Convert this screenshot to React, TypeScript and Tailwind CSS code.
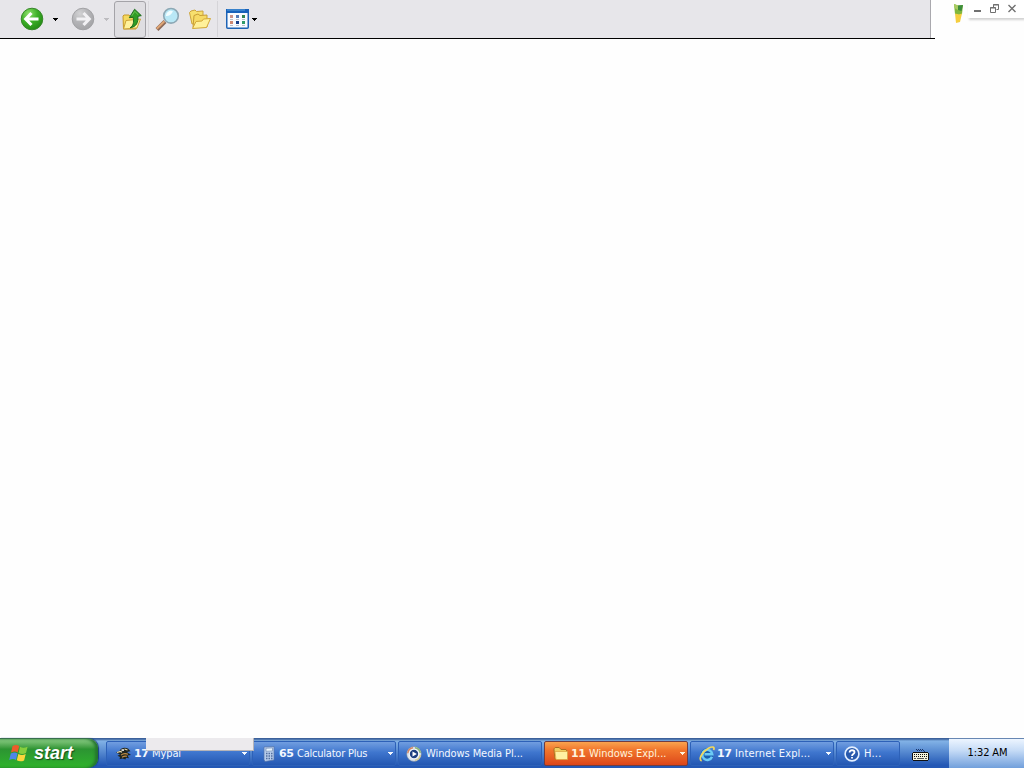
import type { ReactNode } from 'react'
import clsx from 'clsx'

const Caret = ({ className }: { className?: string }) => (
  <svg viewBox="0 0 5 3" shapeRendering="crispEdges" className={clsx('h-[3px] w-[5px] shrink-0', className)}>
    <path d="M0 0h5v1H4v1H3v1H2V2H1V1H0z" fill="currentColor" />
  </svg>
)

const RoundArrow = ({ forward }: { forward?: boolean }) => {
  const id = forward ? 'forward-fill' : 'back-fill'
  return (
    <svg viewBox="0 0 24 24" className="size-6 shrink-0">
      <defs>
        <radialGradient id={id} cx="35%" cy="25%" r="80%">
          <stop offset="0" stopColor={forward ? '#d2d2d4' : '#8fe06c'} />
          <stop offset="0.5" stopColor={forward ? '#b4b4b7' : '#3db027'} />
          <stop offset="1" stopColor={forward ? '#a3a3a6' : '#238a14'} />
        </radialGradient>
      </defs>
      <circle cx="12" cy="12" r="10.8" fill={`url(#${id})`} stroke={forward ? '#a2a2a5' : '#38872a'} strokeWidth="1" />
      <path
        d="M11.5 6 5.7 12l5.8 6M6.5 12h12"
        fill="none"
        stroke={forward ? '#f2f1f4' : '#fff'}
        strokeWidth="3.1"
        transform={forward ? 'translate(24 0) scale(-1 1)' : undefined}
      />
    </svg>
  )
}

const FolderUpIcon = () => (
  <svg viewBox="0 0 22 24" className="h-6 w-[22px]">
    <path d="M2 9 3 8h5l2 2h5v12H2.5z" fill="#f5d95f" stroke="#c79a28" />
    <path d="m2.5 22 2.5-8.5 14.5-1.5L16 21z" fill="#fff29b" stroke="#cca238" />
    <path d="M9 20.8c3.4-2 4-5 3.2-10.5l-3.9.4L13.6 2.2l6.7 6.4-3.4.8c.6 6-1.6 10.6-7.9 11.4z" fill="#2f9d25" stroke="#17661a" strokeWidth=".9" />
    <path d="m10.8 8.9 2.9-4.6 3.6 3.5" fill="none" stroke="#6fc455" />
  </svg>
)

const SearchIcon = () => (
  <svg viewBox="0 0 25 25" className="size-[25px] shrink-0">
    <path d="m2 22.5 8-8" stroke="#8b6857" strokeWidth="4" />
    <path d="m1.8 21.8 7.6-7.6" stroke="#dfa575" strokeWidth="2" />
    <circle cx="16" cy="8.8" r="7.3" fill="#b9e8f6" stroke="#8da8b5" strokeWidth="1.6" />
    <path d="M11 9a5 5 0 0 1 7-4.8c-2 4-4 5-7 4.8" fill="#f1fdff" />
  </svg>
)

const FoldersIcon = () => (
  <svg viewBox="0 0 24 23" className="h-[23px] w-6 shrink-0">
    <path d="M4 16 1.5 4.5 3 3l4-1 1.5 1.5L15 3v12z" fill="#f7e06e" stroke="#cda33c" />
    <path d="M5 19.5 6 7.5 10 6l2 1.5 7-.5v12z" fill="#f6da65" stroke="#c89d35" />
    <path d="m4.5 20.5 3.5-7 6-.5 1.5-2 7-.5-4 9z" fill="#fff19a" stroke="#d3a938" />
  </svg>
)

const viewCells = ['#c99289', '#527ab6', '#318451', '#cf8872', '#193f8a', '#2f9a68']

const ViewsIcon = () => (
  <svg viewBox="0 0 23 20" className="h-5 w-[23px] shrink-0">
    <rect x=".75" y=".75" width="21.5" height="18.5" rx="1" fill="#f9fbff" stroke="#1d63b5" strokeWidth="1.5" />
    <path d="M0 0h23v4H0z" fill="#1761ba" />
    <path d="M1 1h18" stroke="#5ba3dd" />
    {viewCells.map((fill, i) => (
      <g key={fill} transform={`translate(${4 + (i % 3) * 6} ${6 + Math.floor(i / 3) * 6})`}>
        <rect width="3" height="3" fill={fill} />
        <path d="M0 4.5h3" stroke="#b8bdca" />
      </g>
    ))}
  </svg>
)

const FlagIcon = ({ className }: { className?: string }) => (
  <svg viewBox="0 0 20 18" className={className}>
    <path d="M3.6 2c2.8-1.5 4.6-1.2 6.6.1L8.7 8.4C6.8 7.1 5 7.1 2 8.4z" fill="#ed5b2b" />
    <path d="M11 2.8c2.5 1.4 4.8 1.2 7.6-.1L17 9c-2.6 1.2-5 1.3-7.4-.1z" fill="#86ce3d" />
    <path d="M1.8 9.4c2.8-1.2 4.8-1.2 6.7.1L7 15.9c-2.2-1.3-4-1.3-6.8 0z" fill="#4e86e8" />
    <path d="M9.3 10c2.5 1.4 4.9 1.3 7.4.1l-1.6 6.3c-2.5 1.2-4.9 1.2-7.3-.1z" fill="#fbd53c" />
  </svg>
)

const BirdIcon = () => (
  <svg viewBox="0 0 16 16" className="size-4 shrink-0">
    <path d="M0 6.5 3.5 5C5 1.5 9 1 12 2.5l2.5 2.8L11 6l4 3-3.5.6 1.5 2.6-3-.5-.5 1.8-3-1-3 .7L4 11 1.5 9.8 4 8.5z" fill="#20251f" />
    <path d="m1 6.5 3.5-1 1.5.8M8.5 3l3 1" fill="none" stroke="#e8d9ad" strokeWidth="1.2" />
    <path d="M5 9.2c2-1.8 4-2 7-1M6 11.2c2-1.2 3-1.4 5-.9" fill="none" stroke="#c58f45" strokeWidth="1.1" />
    <path d="M5.5 3.3h2.5v1.5H5.5z" fill="#fff" />
  </svg>
)

const CalculatorIcon = () => (
  <svg viewBox="0 0 16 16" className="size-4 shrink-0">
    <path d="m3 1 10-.5V14l-9 1.5-1-2z" fill="#b7cceb" stroke="#5573a9" strokeWidth=".7" />
    <path d="m5 2.3 6.5-.4v3L5 5.3z" fill="#e8f5ff" stroke="#6881a8" strokeWidth=".6" />
    <path d="M5 7.4h1.5m1 0H9m1 0h1.5M5 10h1.5m1 0H9m1 0h1.5M5 12.6h1.5m1 0H9m1 0h1.5" stroke="#526e9e" strokeWidth="1.5" />
  </svg>
)

const MediaIcon = () => (
  <svg viewBox="0 0 16 16" className="size-4 shrink-0">
    <circle cx="8" cy="8" r="7.4" fill="#dce5f0" stroke="#6e7f98" strokeWidth=".6" />
    <path d="M1.8 7.3A6.2 6.2 0 0 1 7 1.8" stroke="#d9855f" strokeWidth="1.4" fill="none" />
    <path d="M9 1.8A6.2 6.2 0 0 1 14.2 7" stroke="#8ab874" strokeWidth="1.4" fill="none" />
    <path d="M14.2 9A6.2 6.2 0 0 1 9 14.2" stroke="#dcca79" strokeWidth="1.2" fill="none" />
    <circle cx="8" cy="8" r="5" fill="#fff" />
    <circle cx="8" cy="8" r="4.2" fill="#1d3f80" />
    <path d="m6.5 5.4 4.4 2.6-4.4 2.6z" fill="#fff" />
  </svg>
)

const FolderIcon = () => (
  <svg viewBox="0 0 16 16" className="size-4 shrink-0">
    <path d="M1 4V2.8L2.2 1.5h4L8 3.5h5L14 5v8H2z" fill="#f0cf60" stroke="#a96d20" />
    <path d="M2 5.5h12.5V13.5H3z" fill="#fff1a2" stroke="#dba441" strokeWidth=".7" />
  </svg>
)

const ExplorerIcon = () => (
  <svg viewBox="0 0 16 16" className="size-4 shrink-0">
    <circle cx="8" cy="8.5" r="6.3" fill="#1b5fae" />
    <path d="M13 10.7A5 5 0 1 1 13.3 8.3H5.5" fill="none" stroke="#6ccbf6" strokeWidth="2.5" />
    <path d="M2.6 15C-1.2 13.5 3.5 5.5 9.5 2.2 13.5.1 15.9.8 14.7 4" fill="none" stroke="#f2d85b" strokeWidth="1.7" />
  </svg>
)

const HelpIcon = () => (
  <svg viewBox="0 0 16 16" className="size-4 shrink-0">
    <circle cx="8" cy="8" r="6.9" fill="#2859ad" stroke="#e3efff" strokeWidth="1.6" />
    <path d="M5.6 6.4c0-3 4.9-2.7 4.9-.2C10.5 8 8 8 8 10" fill="none" stroke="#fff" strokeWidth="1.8" />
    <path d="M7.1 11h1.8v1.6H7.1z" fill="#fff" />
  </svg>
)

const KeyboardIcon = () => (
  <svg viewBox="0 0 17 13" shapeRendering="crispEdges" className="h-[13px] w-[17px]">
    <path d="M4 1h1v1h1V1h1v1h1V1h1v1h1V1h1v1h1v1h1v1h-1V3h-1V2h-1v1H9V2H8v1H7V2H6v1H5V2H4z" fill="#17346a" />
    <path d="M1 4h15v1h1v7h-1v1H1v-1H0V5h1z" fill="#111" />
    <path d="M1 5h15v7H1z" fill="#f5f4dd" />
    <path d="M2 6.5h13M2 8.5h13" stroke="#111" strokeDasharray="1 1" />
    <path d="M2 10.5h2m1 0h7m1 0h2" stroke="#555" />
  </svg>
)

interface Task {
  label: string
  icon: ReactNode
  count?: number
  width: string
  iconPad: string
  gap: string
  tracking: string
  caret?: boolean
  active?: boolean
}

const tasks: Task[] = [
  { label: 'Mypal', icon: <BirdIcon />, count: 17, width: 'w-[144px]', iconPad: 'pl-[9px]', gap: 'gap-[2px]', tracking: 'tracking-[-0.1px]', caret: true },
  { label: 'Calculator Plus', icon: <CalculatorIcon />, count: 65, width: 'w-[144px]', iconPad: 'pl-[8px]', gap: 'gap-[2px]', tracking: 'tracking-[-0.22px]', caret: true },
  { label: 'Windows Media Pl...', icon: <MediaIcon />, width: 'w-[144px]', iconPad: 'pl-[7px]', gap: 'gap-[4px]', tracking: 'tracking-[-0.08px]' },
  { label: 'Windows Expl...', icon: <FolderIcon />, count: 11, width: 'w-[144px]', iconPad: 'pl-[8px]', gap: 'gap-[2px]', tracking: 'tracking-[-0.03px]', caret: true, active: true },
  { label: 'Internet Expl...', icon: <ExplorerIcon />, count: 17, width: 'w-[144px]', iconPad: 'pl-[8px]', gap: 'gap-[2px]', tracking: 'tracking-[0.15px]', caret: true },
  { label: 'H...', icon: <HelpIcon />, width: 'w-[64px]', iconPad: 'pl-[7px]', gap: 'gap-[4px]', tracking: 'tracking-[0.2px]' },
]

const TaskButton = ({ task }: { task: Task }) => (
  <button
    className={clsx(
      'flex h-[25px] shrink-0 items-center rounded-[2px] border pr-[2px] text-left text-[11px] leading-[14px]',
      task.width,
      task.iconPad,
      task.gap,
      task.active
        ? 'border-[#713d42] bg-linear-to-b from-[#f9a34e] via-[#f1752c] via-35% to-[#dc451a] text-[#fff3dc]'
        : 'border-[#2d61b8] bg-linear-to-b from-[#719ee0] via-[#3f76ce] via-45% to-[#2457b2] text-[#f3f8ff]',
    )}
  >
    {task.icon}
    {task.count && <b className="w-[16px] shrink-0 font-['DejaVu_Sans'] text-[11px] tracking-[-0.4px]">{task.count}</b>}
    <span className={clsx('whitespace-nowrap', task.tracking)}>{task.label}</span>
    {task.caret && <Caret className="ml-auto" />}
  </button>
)

const Toolbar = () => (
  <div className="h-[39px] w-[935px] border-b border-black bg-white">
    <div className="flex h-[38px] w-[931px] items-center border-r border-[#aaa9ae] bg-[#e7e6ea] pl-5">
      <RoundArrow />
      <Caret className="ml-[9px]" />
      <div className="ml-[13px] flex">
        <RoundArrow forward />
      </div>
      <Caret className="ml-[9px] text-[#bdbcc0]" />
      <div className="ml-[5px] flex h-[37px] w-[32px] items-center justify-center rounded-[3px] border border-[#a4a3a8] bg-[#dfdee2] pl-1">
        <FolderUpIcon />
      </div>
      <div className="ml-[2px] h-[36px] w-px bg-[#d9d8dc]" />
      <div className="ml-[6px] flex">
        <SearchIcon />
      </div>
      <div className="ml-[8px] flex">
        <FoldersIcon />
      </div>
      <div className="ml-[5px] h-[36px] w-px bg-[#d5d4d8]" />
      <div className="ml-[8px] flex">
        <ViewsIcon />
      </div>
      <Caret className="ml-[3px]" />
    </div>
  </div>
)

const WindowControls = () => (
  <div className="flex flex-1">
    <svg viewBox="0 0 11 20" className="mt-1 ml-[18px] h-5 w-[11px]">
      <path d="m1 0 4 1.5L10 1 9 10l-3 1-4-1z" fill="#80b73d" />
      <path d="m5 1.5 5-.5-1.5 6L5 6z" fill="#3c8c3c" />
      <path d="m1 0 4 1.5V6L1.5 4z" fill="#a9cb62" />
      <path d="m2 9.5 4 1 3-1L7 18l-4 1z" fill="#f5ce3f" />
    </svg>
    <div className="ml-1 flex h-[18px] flex-1 items-start bg-white shadow-[1px_2px_2px_#d2d2d2]">
      <svg viewBox="0 0 56 18" className="h-[18px] w-full" fill="none" stroke="#707070">
        <path d="M6 11h7" strokeWidth="2" />
        <path d="M25.5 7V4.5h5v5h-2M22.5 7.5h5v5h-5z" />
        <path d="M25 5h6M22 8h6" />
        <path d="m40.5 5 7 7m0-7-7 7" strokeWidth="1.4" />
      </svg>
    </div>
  </div>
)

const Taskbar = () => (
  <footer className="relative flex h-[30px] bg-linear-to-b from-[#3c619b] from-3% via-[#82b2e6] via-10% to-[#2458b5] to-90%">
    <button className="flex h-[30px] w-[98px] items-center rounded-r-[10px] border-t border-[#386e4d] bg-linear-to-b from-[#8ccf87] via-[#2c9432] via-35% to-[#2fb42a] pb-[2px] pl-[9px] shadow-[inset_-3px_0_3px_#24752e,1px_0_1px_#173f83]">
      <FlagIcon className="h-[18px] w-5" />
      <span className="ml-[5px] font-['Liberation_Sans'] text-[18px] leading-[22px] font-bold text-white italic [text-shadow:1px_1px_1px_#174b1d]">
        start
      </span>
    </button>
    <div className="mt-[3px] ml-[8px] flex gap-[2px]">
      {tasks.map((task) => (
        <TaskButton key={task.label} task={task} />
      ))}
    </div>
    <div className="flex flex-1 items-start pt-[10px] pl-[12px]">
      <KeyboardIcon />
    </div>
    <div className="flex w-[75px] items-center justify-center border-t border-[#6787b3] bg-linear-to-b from-[#edf5ff] via-[#c5dbf6] via-40% to-[#719fdb] pl-[2px] text-[11px] tracking-[-0.1px] text-black">
      1:32 AM
    </div>
    <div className="absolute top-0 left-[146px] h-[13px] w-[108px] border-r border-b border-[#b6b4b8] bg-[#eceaed]" />
  </footer>
)

export default function App() {
  return (
    <div className="flex h-screen flex-col overflow-hidden bg-[#fefefe] font-['DejaVu_Sans_Condensed','DejaVu_Sans',sans-serif] text-black">
      <header className="flex">
        <Toolbar />
        <WindowControls />
      </header>
      <main className="flex-1" />
      <Taskbar />
    </div>
  )
}
